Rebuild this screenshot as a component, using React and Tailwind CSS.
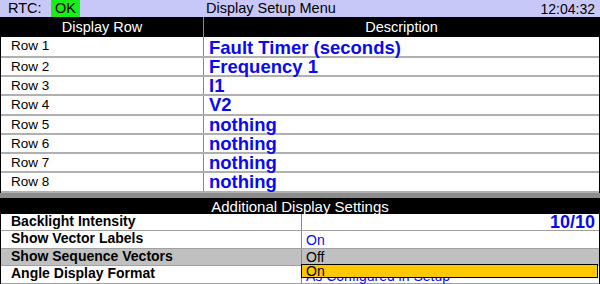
import React from 'react';

const rows = [
  { label: 'Row 1', value: 'Fault Timer (seconds)', h: 'h-[21px]', pad: 'pt-[2px]' },
  { label: 'Row 2', value: 'Frequency 1', h: 'h-[19px]', pad: 'pt-0' },
  { label: 'Row 3', value: 'I1', h: 'h-[19px]', pad: 'pt-0' },
  { label: 'Row 4', value: 'V2', h: 'h-[20px]', pad: 'pt-0' },
  { label: 'Row 5', value: 'nothing', h: 'h-[19px]', pad: 'pt-0' },
  { label: 'Row 6', value: 'nothing', h: 'h-[19px]', pad: 'pt-0' },
  { label: 'Row 7', value: 'nothing', h: 'h-[19px]', pad: 'pt-0' },
  { label: 'Row 8', value: 'nothing', h: 'h-[20px]', pad: 'pt-0' }
];

const font = { fontFamily: '"Liberation Sans", Arial, sans-serif' };

function TitleBar() {
  return (
    <div className="flex h-[17px] items-center bg-[#c8c8f8] text-[14.5px] leading-none text-black">
      <span className="w-[51px] pl-[8px]">RTC:</span>
      <span className="flex h-full w-[29px] items-center justify-center bg-[#18ee18]">OK</span>
      <span className="flex-1 pl-[126px]">Display Setup Menu</span>
      <span className="pr-[5px] text-[14px]">12:04:32</span>
    </div>
  );
}

function DisplayRows() {
  return (
    <div className="border-l border-r border-black">
      <div className="flex h-[20px] bg-black text-[14.5px] leading-none text-white">
        <div className="flex w-[202px] items-center justify-center">Display Row</div>
        <div className="w-px bg-[#888]" />
        <div className="flex flex-1 items-center justify-center">Description</div>
      </div>
      {rows.map((row) => (
        <div key={row.label} className={`flex ${row.h} border-b-2 border-[#b0b0b0]`}>
          <div className="w-[202px] pl-[10px] pt-[1px] text-[13.5px] leading-[15px] text-black">
            {row.label}
          </div>
          <div className="w-px bg-[#888]" />
          <div
            className={`flex-1 pl-[5px] ${row.pad} text-[18.5px] font-bold leading-[18px] text-[#0a0af0]`}
          >
            {row.value}
          </div>
        </div>
      ))}
    </div>
  );
}

function SettingRow({ label, children, gray, h }) {
  return (
    <div className={`flex ${h} border-b border-[#a0a0a0] ${gray ? 'bg-[#c0c0c0]' : 'bg-white'}`}>
      <div className="w-[300px] pl-[10px] text-[14px] font-bold leading-[15px] text-black">
        {label}
      </div>
      <div className="w-px bg-[#888]" />
      <div className="flex-1">{children}</div>
    </div>
  );
}

export default function App() {
  return (
    <div className="relative h-[284px] w-[600px] overflow-hidden bg-white" style={font}>
      <TitleBar />
      <DisplayRows />
      <div className="h-[5px] bg-[#8c8c8c]" />
      <div className="border-l border-r border-black">
        <div className="flex h-[16px] items-center justify-center bg-black text-[15px] leading-none text-white">
          Additional Display Settings
        </div>
        <SettingRow label="Backlight Intensity" h="h-[17px]">
          <div className="pr-[4px] text-right text-[18px] font-bold leading-[17px] text-[#0a0af0]">
            10/10
          </div>
        </SettingRow>
        <SettingRow label="Show Vector Labels" h="h-[18px]">
          <div className="pl-[4px] pt-[2px] text-[14px] leading-[15px] text-[#0a0af0]">On</div>
        </SettingRow>
        <SettingRow label="Show Sequence Vectors" h="h-[17px]" gray>
          <div className="pl-[4px] pt-px text-[14px] leading-[15px] text-black">Off</div>
        </SettingRow>
        <SettingRow label="Angle Display Format" h="h-[18px]">
          <div className="pl-[4px] pt-[3px] text-[14px] leading-[15px] text-[#0a0af0]">
            As Configured in Setup
          </div>
        </SettingRow>
      </div>
      <div className="absolute left-[301px] top-[264px] h-[14px] w-[297px] border border-black bg-[#ffc800] pl-[4px] text-[14px] leading-[12px] text-black">
        On
      </div>
    </div>
  );
}
